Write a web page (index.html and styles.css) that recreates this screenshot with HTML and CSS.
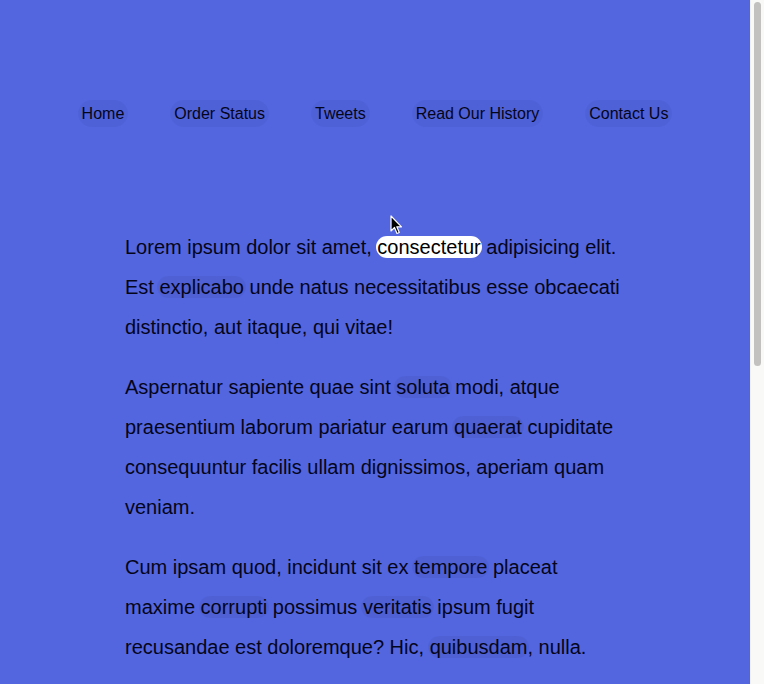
FILE: index.html
```html
<!DOCTYPE html>
<html lang="en">
<head>
<meta charset="utf-8">
<title>Highlight</title>
<link rel="stylesheet" href="styles.css">
</head>
<body>
<div class="page">
  <header class="site-header">
    <nav class="nav">
      <ul class="nav-list">
        <li><a class="nav-link" href="#">Home</a></li>
        <li><a class="nav-link" href="#">Order Status</a></li>
        <li><a class="nav-link" href="#">Tweets</a></li>
        <li><a class="nav-link" href="#">Read Our History</a></li>
        <li><a class="nav-link" href="#">Contact Us</a></li>
      </ul>
    </nav>
  </header>
  <main class="content">
    <p>Lorem ipsum dolor sit amet, <a class="word word-active" href="#">consectetur</a> adipisicing elit. Est <a class="word" href="#">explicabo</a> unde natus necessitatibus esse obcaecati distinctio, aut itaque, qui vitae!</p>
    <p>Aspernatur sapiente quae sint <a class="word" href="#">soluta</a> modi, atque praesentium laborum pariatur earum <a class="word" href="#">quaerat</a> cupiditate consequuntur facilis ullam dignissimos, aperiam quam veniam.</p>
    <p>Cum ipsam quod, incidunt sit ex <a class="word" href="#">tempore</a> placeat maxime <a class="word" href="#">corrupti</a> possimus <a class="word" href="#">veritatis</a> ipsum fugit recusandae est doloremque? Hic, <a class="word" href="#">quibusdam</a>, nulla.</p>
  </main>
  <svg class="cursor" width="13" height="20" viewBox="0 0 13 20" aria-hidden="true">
    <path d="M1 1 L1 16 L4.5 12.5 L7 18.5 L9.3 17.5 L6.8 11.8 L11.5 11.8 Z" fill="#000" stroke="#fff" stroke-width="1.2" stroke-linejoin="round"/>
  </svg>
</div>
<div class="scrollbar" aria-hidden="true">
  <div class="scrollbar-thumb"></div>
</div>
</body>
</html>
```

FILE: styles.css
```css
html,
body {
  height: 100%;
}

body {
  margin: 0;
  display: flex;
  overflow: hidden;
  background: #5366e0;
  font-family: "Liberation Sans", Arial, Helvetica, sans-serif;
  color: #05051a;
}

.page {
  position: relative;
  flex: 1;
  min-width: 0;
  background: #5366e0;
  overflow: hidden;
}

.scrollbar {
  width: 14px;
  flex: none;
  background: #f9f9f8;
  border-left: 1px solid #efefee;
  box-sizing: border-box;
  padding: 2px 3px 0 3px;
}

.scrollbar-thumb {
  height: 364px;
  border-radius: 4px;
  background: #c2c1bf;
}

.site-header {
  padding-top: 100px;
}

.nav-list {
  list-style: none;
  margin: 0;
  padding: 0;
  display: flex;
  justify-content: center;
  gap: 42px;
}

.nav-link {
  display: block;
  padding: 4px 4px;
  line-height: 19px;
  font-size: 16px;
  color: #05051a;
  text-decoration: none;
  border-radius: 14px;
  background: rgba(0, 0, 0, 0.045);
}

.content {
  max-width: 500px;
  margin: 100px auto 0;
}

.content p {
  margin: 0 0 20px;
  font-size: 20px;
  line-height: 40px;
}

.word {
  color: inherit;
  text-decoration: none;
  padding: 0 2px;
  margin: 0 -2px;
  border-radius: 11px;
  background: rgba(0, 0, 0, 0.05);
}

.word-active {
  background: #fff;
  color: #000;
  padding: 0 1px;
  margin: 0 -1px;
}

.cursor {
  position: absolute;
  left: 390px;
  top: 215px;
}
```
